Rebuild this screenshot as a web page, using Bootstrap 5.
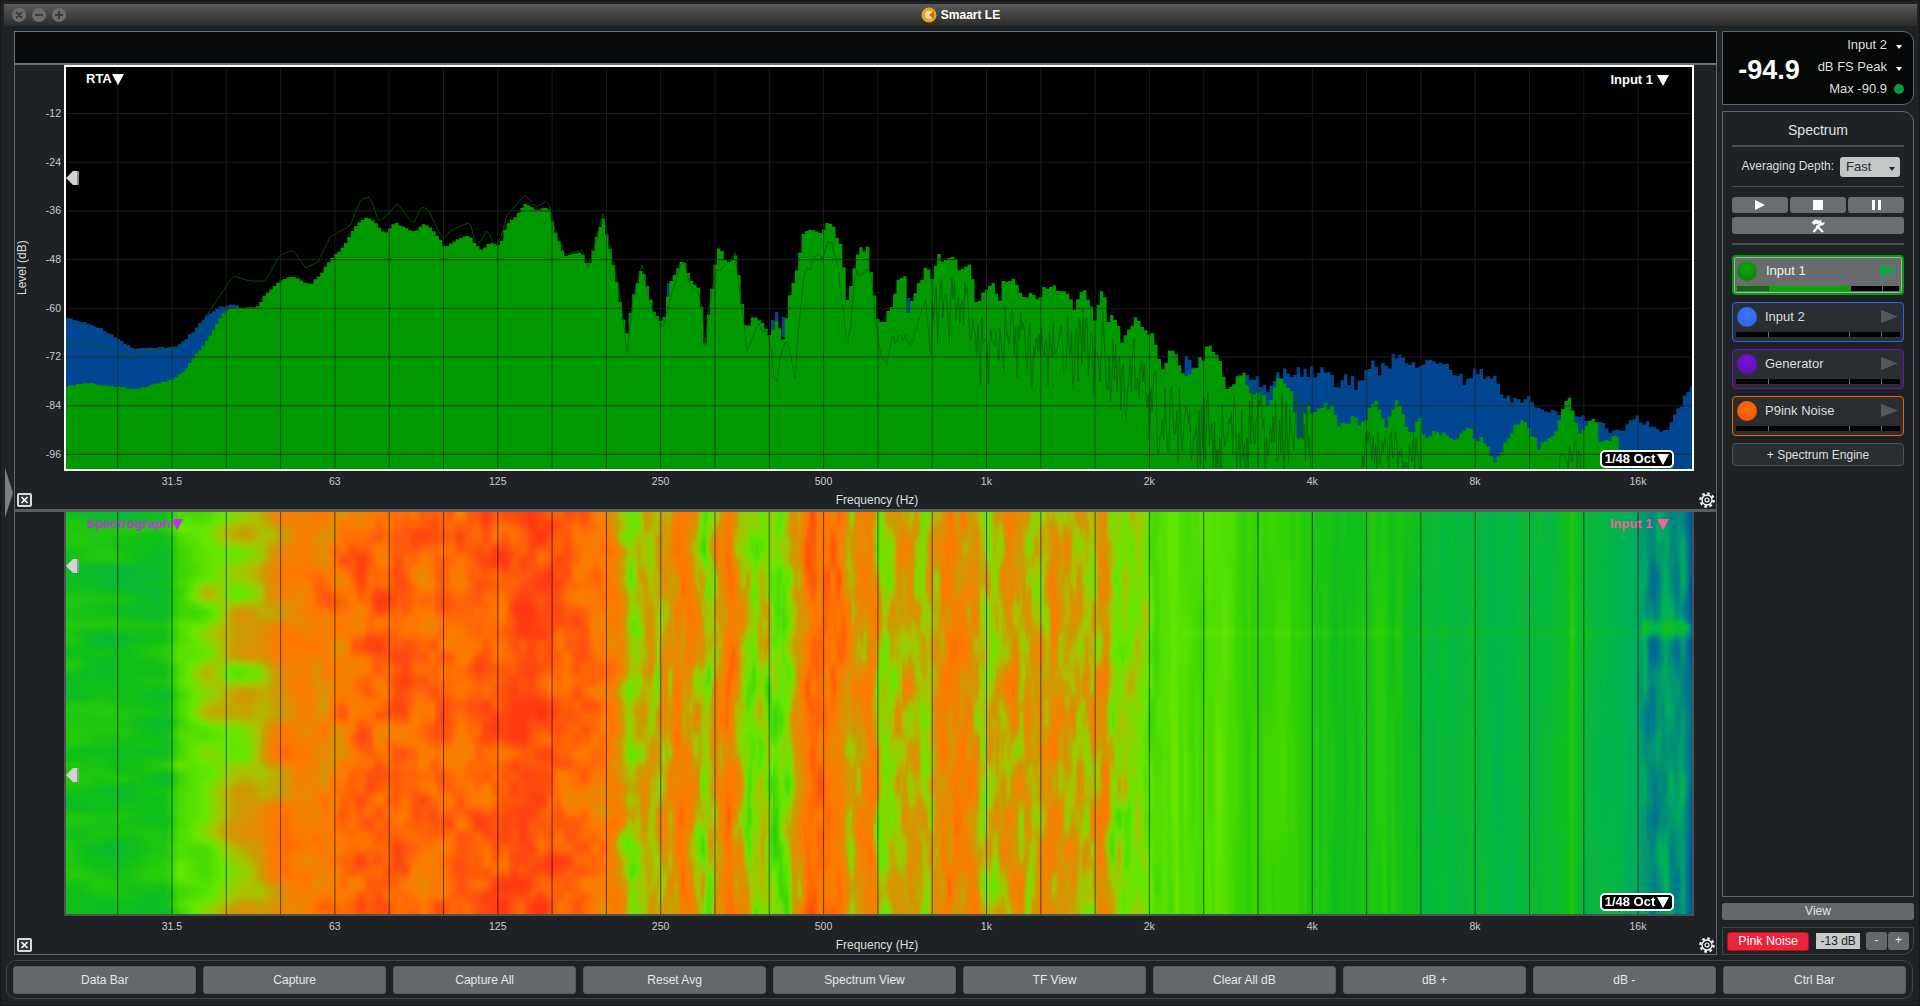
<!doctype html>
<html lang="en">
<head>
<meta charset="utf-8">
<title>Smaart LE</title>
<link href="https://cdn.jsdelivr.net/npm/bootstrap@5.3.0/dist/css/bootstrap.min.css" rel="stylesheet">
<style>
html,body{height:1006px;overflow:hidden}
body{margin:0;background:#1e2225;color:#d8dadb;font-family:"Liberation Sans",Arial,sans-serif;font-size:12px;line-height:1.2;position:relative}
.outer-edge{height:1006px;border:1px solid #15181b}
.titlebar{height:22px;flex:none;margin:3px 2px 0 3px;background:linear-gradient(#5a5a5a,#2b2b2b);position:relative;color:#fff;font-weight:700;font-size:12px}
.lights{position:absolute;left:8px;top:3px}
.workarea{height:929px;flex:none;padding:5px 6px 0 13px;gap:5px}
.leftcol{width:1703px;flex:none}
.rightcol{width:192px;flex:none}
.databar{height:34px;flex:none;background:#090a0b;border:1px solid #66747d;border-bottom-width:2px}
.pane{border-left:1px solid #5c6870;border-right:1px solid #5c6870;flex:none}
.pane-a{height:447px;border-bottom:3px solid #565d63}
.pane-b{height:443px;border-bottom:1px solid #5c6870}
.axis-slot{width:49px;flex:none}
.axis-y{height:406px}
.axis-name{width:22px;writing-mode:vertical-rl;transform:rotate(180deg);text-align:center;font-size:12px;color:#dcdedf}
.axis-ticks{padding-top:24px;padding-right:3px;flex:1}
.ytick{height:48.7px;line-height:48.7px;text-align:right;font-size:10.5px;color:#c9cbcc}
.ytick:last-child{height:41px}
.plot-frame{width:1630px;flex:none;position:relative}
.plot-a{height:406px;border:2px solid #fff;background:#000}
.plot-b{height:404px;border:2px solid #4b5450;border-top:0;background:#000}
.layer{display:block;position:absolute;left:0;top:0;width:100%;height:100%}
.xrow{height:20px;padding-left:26.5px;margin-left:49px;font-size:10.5px;color:#c9cbcc;line-height:20px}
.xlab{width:162.9px;flex:none;text-align:center}
.foot{height:18px}
.foot-label{width:1626px;flex:none;text-align:center;font-size:12px;color:#dcdedf;line-height:14px}
.closer{width:15px;height:14px;border:2px solid #d8d8d8;border-radius:2px;margin-left:2px;background:#30363a;display:block}
.gear{margin-right:1px}
.overlay-l,.overlay-r{position:absolute;font-weight:700;font-size:13px;line-height:14px;display:flex;align-items:center;gap:0}
.overlay-l{left:20px;top:5px}
.overlay-r{right:23px;top:6px;gap:4px}
.over-b-l{top:5px}
.over-b-r{top:5px}
.tag-purple{color:#c22ff0}
.tag-pink{color:#ff5ea0}
.tag-white{color:#fff}
.tri{display:inline-block;width:0;height:0;border-left:6px solid transparent;border-right:6px solid transparent;border-top:11px solid currentColor}
.octave{position:absolute;right:18px;bottom:1px;height:18px;width:74px;background:#000;color:#fff;border:2px solid #fff;border-radius:5px;font-weight:700;font-size:13px;display:flex;align-items:center;justify-content:center;gap:2px}
.octave-b{bottom:3px}
.handle{position:absolute;left:0;width:13px;height:14px;display:block}
.hnd-a{top:104px}
.hnd-b{top:47px}
.hnd-c{top:256px}
.side-tab{position:absolute;left:5px;top:468px;width:8px;height:50px;display:block}
.meterbox{height:74px;flex:none;background:#060707;border:1px solid #5c6870;border-radius:0 11px 11px 0;margin-bottom:6px}
.bigval{width:92px;flex:none;font-size:27px;font-weight:700;color:#fff;text-align:center;padding-top:5px}
.meterrows{flex:1;padding-top:2px}
.mrow{height:22px;font-size:13px;color:#dcdedf}
.mslot{width:26px;flex:none;display:flex;justify-content:center;padding-right:2px}
.caret-w{width:0;height:0;border-left:3.5px solid transparent;border-right:3.5px solid transparent;border-top:4px solid #fff;margin-top:4px}
.led{width:10px;height:10px;border-radius:50%;background:#0a9a3a}
.specbox{height:786px;flex:none;border:1px solid #5c6870;border-radius:0 11px 0 0;padding:0 9px}
.spechead{height:33px;line-height:37px;text-align:center;font-size:14px;color:#e0e1e2}
.rule{height:2px;background:#474d52}
.avgrow{height:39px;padding-right:4px;gap:6px;font-size:12px;color:#dcdedf}
.fastsel{width:60px;height:20px;background:#c3c7c7;color:#2a2c2e;border-radius:3px;font-size:13px;padding:0 6px;line-height:20px;position:relative}
.fastsel i{position:absolute;right:5px;top:10px;width:0;height:0;border-left:3.5px solid transparent;border-right:3.5px solid transparent;border-top:4px solid #222}
.rule-thin{height:1px;background:#474d52;margin-bottom:10px}
.trans{height:16px;gap:2px}
.trans>div{flex:1;background:#696e73;border-radius:3px;display:flex;align-items:center;justify-content:center}
.toolsbtn{height:17px;background:#696e73;border-radius:3px;margin-top:4px;display:flex;align-items:center;justify-content:center}
.rule-eng{margin-top:9px;margin-bottom:10px}
.engines{gap:7px}
.engine{height:40px;border:1.5px solid;border-radius:4px;background:#2a2e33;padding:1px 3px 0 4px;color:#dcdedf;font-size:13px}
.engine-on{background:#686c6e;border:2px solid #00a000;box-shadow:inset 0 0 0 1px #a8acac;padding:1px 3px 0;color:#f0f0f0}
.eng-blue{border-color:#2a62e8}
.eng-purple{border-color:#6c10c8}
.eng-orange{border-color:#f06000}
.engtop{height:25px;gap:8px}
.engine-on .engtop{gap:9px}
.dot{width:20px;height:20px;border-radius:50%;flex:none}
.dot-g{background:radial-gradient(circle at 50% 35%,#10a810,#067a06)}
.dot-b{background:radial-gradient(circle at 50% 35%,#3f78ff,#2a5be8)}
.dot-p{background:radial-gradient(circle at 50% 35%,#7a12d8,#5a0cae)}
.dot-o{background:radial-gradient(circle at 50% 35%,#ff6a08,#e85400)}
.playtri{margin-left:auto;margin-right:2px;display:block}
.mtr{height:5px;background:#000;margin-top:3px;margin-left:-1px}
.engine-on .mtr{margin-left:0}
.mtr>span{display:block;height:100%}
.s1{width:32px}.s2{width:81px;border-left:1px solid #6d6d6d}.s3{width:32px;border-left:1px solid #6d6d6d}.s4{width:17px;border-left:1px solid #6d6d6d}
.lit1{background:#0a6a0a}.lit2{background:#00aa00;border-left:0}
.addeng{height:23px;margin-top:7px;border:1px solid #4c5258;border-radius:4px;background:#2a2e33;text-align:center;line-height:22px;font-size:12px;color:#dcdedf}
.viewbtn{height:17px;flex:none;margin-top:6px;background:#63686c;border-radius:3px;text-align:center;line-height:17px;font-size:12px;color:#e2e3e4}
.pinkbox{height:28px;flex:none;margin-top:7px;border:1px solid #3e454a;border-radius:0 0 11px 0;padding:0 4px;gap:7px}
.pinkbtn{width:83px;height:19px;background:#ee2238;border:1px solid #b01020;border-radius:3px;color:#fff;text-align:center;line-height:17px;font-size:12.5px}
.dbval{width:44px;height:16px;background:#c5c9c9;color:#222;text-align:center;line-height:16px;font-size:12px}
.pm{gap:1px;margin-left:-1px}
.pm>div{width:21px;height:18px;background:#63686c;color:#e8e8e8;text-align:center;line-height:17px;font-size:12px;border-radius:3px}
.bottombar{height:39px;flex:none;margin:5px 6px 0 5px;border:1px solid #3e454a;border-radius:10px;padding:5px 6px;gap:6.5px}
.bar-btn.btn{flex:1 1 0;height:28px;font-size:12px;padding:0;line-height:27px;color:#e6e7e8;background:#63686c;border:1px solid #575c60;border-radius:3px}
</style>
</head>
<body>
<div class="outer-edge d-flex flex-column">
  <div class="titlebar d-flex align-items-center justify-content-center gap-1">
    <svg class="lights" width="66" height="16" viewBox="0 0 66 16" aria-hidden="true">
      <g fill="#6c6c6c"><circle cx="7" cy="8" r="7"/><circle cx="27" cy="8" r="7"/><circle cx="47" cy="8" r="7"/></g>
      <g stroke="#3c3c3c" stroke-width="2" fill="none"><path d="M4 5l6 6M10 5l-6 6M23 8h8M43 8h8M47 4v8"/></g>
    </svg>
    <svg width="16" height="16" viewBox="0 0 16 16" aria-hidden="true"><circle cx="8" cy="8" r="7.5" fill="#f0a020"/><circle cx="8" cy="8" r="4" fill="#ffe6a0"/><path d="M8 8l5-4v8z" fill="#c86a10"/></svg>
    <span>Smaart LE</span>
  </div>
  <div class="workarea d-flex">
    <div class="leftcol d-flex flex-column">
      <div class="databar"></div>
      <div class="pane pane-a">
        <div class="d-flex">
          <div class="axis-slot axis-y d-flex">
            <div class="axis-name">Level (dB)</div>
            <div class="axis-ticks d-flex flex-column">
              <div class="ytick">-12</div><div class="ytick">-24</div><div class="ytick">-36</div><div class="ytick">-48</div><div class="ytick">-60</div><div class="ytick">-72</div><div class="ytick">-84</div><div class="ytick">-96</div>
            </div>
          </div>
          <div class="plot-frame plot-a">
            <svg id="rta" class="layer" viewBox="66 67 1626 402" preserveAspectRatio="none" aria-hidden="true"></svg>
            <div class="overlay-l tag-white"><span>RTA</span><span class="tri"></span></div>
            <div class="overlay-r tag-white"><span>Input 1</span><span class="tri"></span></div>
            <svg class="handle hnd-a" viewBox="0 0 13 14" aria-hidden="true"><path d="M0 7L7 0h5.5v14H7z" fill="#d2d2d2"/><path d="M11 0h1.5v14H11z" fill="#8e8e8e"/></svg>
            <div class="octave"><span>1/48 Oct</span><span class="tri"></span></div>
          </div>
        </div>
        <div class="xrow d-flex"><span class="xlab">31.5</span><span class="xlab">63</span><span class="xlab">125</span><span class="xlab">250</span><span class="xlab">500</span><span class="xlab">1k</span><span class="xlab">2k</span><span class="xlab">4k</span><span class="xlab">8k</span><span class="xlab">16k</span></div>
        <div class="foot d-flex align-items-center">
          <div class="axis-slot"><svg class="closer" viewBox="0 0 11 10" aria-hidden="true"><path d="M2.5 2l6 6M8.5 2l-6 6" stroke="#fff" stroke-width="1.6"/></svg></div>
          <div class="foot-label">Frequency (Hz)</div>
          <svg width="16" height="16" viewBox="0 0 16 16" class="ms-auto gear" aria-hidden="true"><circle cx="8" cy="8" r="6.6" fill="none" stroke="#fff" stroke-width="2.4" stroke-dasharray="2.6 2.58"/><circle cx="8" cy="8" r="5" fill="#1e2225" stroke="#fff" stroke-width="1.3"/><circle cx="8" cy="8" r="2" fill="none" stroke="#fff" stroke-width="1.2"/></svg>
        </div>
      </div>
      <div class="pane pane-b">
        <div class="d-flex">
          <div class="axis-slot"></div>
          <div class="plot-frame plot-b">
            <canvas id="spectro" class="layer" width="813" height="101"></canvas>
            <svg id="spgrid" class="layer" viewBox="66 512 1626 402" preserveAspectRatio="none" aria-hidden="true"></svg>
            <div class="overlay-l over-b-l tag-purple"><span>Spectrograph</span><span class="tri"></span></div>
            <div class="overlay-r over-b-r tag-pink"><span>Input 1</span><span class="tri"></span></div>
            <svg class="handle hnd-b" viewBox="0 0 13 14" aria-hidden="true"><path d="M0 7L7 0h5.5v14H7z" fill="#d2d2d2"/><path d="M11 0h1.5v14H11z" fill="#8e8e8e"/></svg>
            <svg class="handle hnd-c" viewBox="0 0 13 14" aria-hidden="true"><path d="M0 7L7 0h5.5v14H7z" fill="#d2d2d2"/><path d="M11 0h1.5v14H11z" fill="#8e8e8e"/></svg>
            <div class="octave octave-b"><span>1/48 Oct</span><span class="tri"></span></div>
          </div>
        </div>
        <div class="xrow d-flex"><span class="xlab">31.5</span><span class="xlab">63</span><span class="xlab">125</span><span class="xlab">250</span><span class="xlab">500</span><span class="xlab">1k</span><span class="xlab">2k</span><span class="xlab">4k</span><span class="xlab">8k</span><span class="xlab">16k</span></div>
        <div class="foot d-flex align-items-center">
          <div class="axis-slot"><svg class="closer" viewBox="0 0 11 10" aria-hidden="true"><path d="M2.5 2l6 6M8.5 2l-6 6" stroke="#fff" stroke-width="1.6"/></svg></div>
          <div class="foot-label">Frequency (Hz)</div>
          <svg width="16" height="16" viewBox="0 0 16 16" class="ms-auto gear" aria-hidden="true"><circle cx="8" cy="8" r="6.6" fill="none" stroke="#fff" stroke-width="2.4" stroke-dasharray="2.6 2.58"/><circle cx="8" cy="8" r="5" fill="#1e2225" stroke="#fff" stroke-width="1.3"/><circle cx="8" cy="8" r="2" fill="none" stroke="#fff" stroke-width="1.2"/></svg>
        </div>
      </div>
    </div>
    <div class="rightcol d-flex flex-column">
      <div class="meterbox d-flex">
        <div class="bigval d-flex align-items-center justify-content-center">-94.9</div>
        <div class="meterrows d-flex flex-column">
          <div class="mrow d-flex align-items-center justify-content-end"><span>Input 2</span><span class="mslot"><span class="caret-w"></span></span></div>
          <div class="mrow d-flex align-items-center justify-content-end"><span>dB FS Peak</span><span class="mslot"><span class="caret-w"></span></span></div>
          <div class="mrow d-flex align-items-center justify-content-end"><span>Max -90.9</span><span class="mslot"><span class="led"></span></span></div>
        </div>
      </div>
      <div class="specbox d-flex flex-column">
        <div class="spechead">Spectrum</div>
        <div class="rule"></div>
        <div class="avgrow d-flex align-items-center justify-content-end"><span>Averaging Depth:</span><div class="fastsel">Fast<i></i></div></div>
        <div class="rule-thin"></div>
        <div class="trans d-flex">
          <div><svg width="12" height="10" viewBox="0 0 12 10" aria-hidden="true"><path d="M1 0l10 5-10 5z" fill="#fff"/></svg></div>
          <div><svg width="10" height="10" viewBox="0 0 10 10" aria-hidden="true"><rect width="10" height="10" fill="#fff"/></svg></div>
          <div><svg width="9" height="10" viewBox="0 0 9 10" aria-hidden="true"><path d="M0 0h3v10H0zM6 0h3v10H6z" fill="#fff"/></svg></div>
        </div>
        <div class="toolsbtn"><svg width="14" height="14" viewBox="0 0 14 14" aria-hidden="true"><path d="M2.500 13L9.500 5" stroke="#fff" stroke-width="2.200"/><path d="M.5 3.500L4 .5 8 1.500 9 3 7 5.500 5 4.500 3 6z" fill="#fff"/><path d="M5.500 6.500L12 13" stroke="#fff" stroke-width="2.200"/><path d="M10.500 .5a3 3 0 0 0-2 4l2 2a3 3 0 0 0 3-3.500l-2 1-1.300-1.300z" fill="#fff"/></svg></div>
        <div class="rule rule-eng"></div>
        <div class="engines d-flex flex-column">
          <div class="engine engine-on">
            <div class="engtop d-flex align-items-center"><span class="dot dot-g"></span><span>Input 1</span><svg class="playtri" width="17" height="13" viewBox="0 0 17 13" aria-hidden="true"><path d="M0 0l17 6.500L0 13z" fill="#0aa54a"/></svg></div>
            <div class="mtr d-flex"><span class="s1 lit1"></span><span class="s2 lit2"></span><span class="s3"></span><span class="s4"></span></div>
          </div>
          <div class="engine eng-blue">
            <div class="engtop d-flex align-items-center"><span class="dot dot-b"></span><span>Input 2</span><svg class="playtri" width="17" height="13" viewBox="0 0 17 13" aria-hidden="true"><path d="M0 0l17 6.500L0 13z" fill="#54585c"/></svg></div>
            <div class="mtr d-flex"><span class="s1"></span><span class="s2"></span><span class="s3"></span><span class="s4"></span></div>
          </div>
          <div class="engine eng-purple">
            <div class="engtop d-flex align-items-center"><span class="dot dot-p"></span><span>Generator</span><svg class="playtri" width="17" height="13" viewBox="0 0 17 13" aria-hidden="true"><path d="M0 0l17 6.500L0 13z" fill="#54585c"/></svg></div>
            <div class="mtr d-flex"><span class="s1"></span><span class="s2"></span><span class="s3"></span><span class="s4"></span></div>
          </div>
          <div class="engine eng-orange">
            <div class="engtop d-flex align-items-center"><span class="dot dot-o"></span><span>P9ink Noise</span><svg class="playtri" width="17" height="13" viewBox="0 0 17 13" aria-hidden="true"><path d="M0 0l17 6.500L0 13z" fill="#54585c"/></svg></div>
            <div class="mtr d-flex"><span class="s1"></span><span class="s2"></span><span class="s3"></span><span class="s4"></span></div>
          </div>
        </div>
        <div class="addeng">+ Spectrum Engine</div>
      </div>
      <div class="viewbtn">View</div>
      <div class="pinkbox d-flex align-items-center">
        <div class="pinkbtn">Pink Noise</div>
        <div class="dbval">-13 dB</div>
        <div class="pm d-flex"><div>-</div><div>+</div></div>
      </div>
    </div>
  </div>
  <div class="bottombar d-flex">
    <button class="btn bar-btn">Data Bar</button>
    <button class="btn bar-btn">Capture</button>
    <button class="btn bar-btn">Capture All</button>
    <button class="btn bar-btn">Reset Avg</button>
    <button class="btn bar-btn">Spectrum View</button>
    <button class="btn bar-btn">TF View</button>
    <button class="btn bar-btn">Clear All dB</button>
    <button class="btn bar-btn">dB +</button>
    <button class="btn bar-btn">dB -</button>
    <button class="btn bar-btn">Ctrl Bar</button>
  </div>
</div>
<svg class="side-tab" viewBox="0 0 8 50" aria-hidden="true"><path d="M0 0l8 25-8 25z" fill="#7a7f82"/></svg>
<script>
(function(){
  var NS='http://www.w3.org/2000/svg';
  var seed=12345;
  function R(){seed=(seed*1664525+1013904223)>>>0;return seed/4294967296;}
  function mk(p,t,a){var e=document.createElementNS(NS,t);for(var k in a)e.setAttribute(k,a[k]);p.appendChild(e);return e;}
  function lerp(pts,x){
    if(x<=pts[0][0])return pts[0][1];
    for(var i=1;i<pts.length;i++){if(x<=pts[i][0]){var a=pts[i-1],b=pts[i];return a[1]+(b[1]-a[1])*(x-a[0])/(b[0]-a[0]);}}
    return pts[pts.length-1][1];
  }
  var z8=[[0,195],[20,135],[60,95],[75,70],[110,90],[145,80],[165,150],[195,230],[245,215],[265,265],[290,170],[310,115],[330,205],[350,300],[365,390],[380,465],[400,350],[425,260],[445,325],[460,395],[490,430],[510,310],[550,235],[570,300],[600,325],[615,490],[630,365],[650,220],[660,195],[680,250],[710,225],[725,360],[740,455],[760,405],[790,430],[810,470],[830,420],[850,480],[870,340],[890,270],[910,160],[930,150],[965,160],[985,120],[1015,165],[1030,240],[1040,370],[1060,300],[1065,225],[1085,210],[1110,215],[1115,300],[1130,405],[1140,435],[1175,380],[1195,295],[1215,300],[1225,395],[1245,350],[1260,300],[1280,265],[1300,310],[1310,225],[1340,240],[1360,225],[1385,280],[1390,245],[1410,250],[1430,380],[1450,340],[1475,315],[1490,330]].map(function(p){return [500+p[0]/3,180+p[1]/3];});
  var z9=[[0,170],[10,125],[25,120],[45,155],[60,180],[72,150],[90,180],[103,130],[120,150],[135,150],[155,165],[165,210],[185,135],[200,180],[215,245],[232,118],[240,240],[262,225],[270,300],[290,270],[307,217],[325,275],[345,265],[360,390],[390,320],[405,395],[440,380],[475,318],[490,355],[510,460],[543,397],[560,470],[600,480],[635,405],[655,480],[670,600],[690,510],[715,495],[745,515],[760,570],[790,530],[810,570],[845,457],[860,560],[885,490],[900,495],[920,590],[940,530],[950,590],[985,570],[1000,600],[1050,570],[1085,610],[1110,670],[1150,560],[1175,545],[1205,620],[1245,570],[1255,520],[1272,455],[1285,530],[1300,600],[1320,535],[1335,540],[1345,610],[1380,590],[1395,685],[1580,700]].map(function(p){return [1000+p[0]/2.24,240+p[1]/3];});
  var G=[[66,386],[87,383],[117,387],[133,389],[150,386],[173,379],[183,373],[193,358],[203,347],[213,330],[223,313],[230,308],[257,307],[267,293],[280,280],[293,276],[305,282],[310,285],[320,275],[330,260],[345,245],[355,226],[365,217],[375,222],[385,233],[395,222],[405,228],[415,232],[425,223],[435,232],[445,247],[460,238],[470,236],[480,250],[490,243]].concat(z8).concat(z9);
  var B=[[66,318],[83,322],[100,328],[117,338],[133,348],[150,348],[177,347],[193,332],[207,315],[220,307],[233,304],[240,307],[260,330],[1150,470],[1187,358],[1199,365],[1223,378],[1228,393],[1252,378],[1268,390],[1283,373],[1306,373],[1326,370],[1339,388],[1348,378],[1357,385],[1370,362],[1379,373],[1399,355],[1413,365],[1433,362],[1451,368],[1466,383],[1475,370],[1495,380],[1504,397],[1531,400],[1540,412],[1558,412],[1574,418],[1605,422],[1609,432],[1629,428],[1634,415],[1643,425],[1670,428],[1683,400],[1692,387]];
  var D=[[66,343],[75,342],[100,345],[130,357],[150,351],[170,348],[177,347],[195,333],[207,315],[233,276],[250,281],[265,281],[280,255],[293,250],[306,268],[318,262],[330,237],[350,226],[361,199],[370,197],[379,222],[388,214],[397,203],[413,224],[421,207],[428,209],[443,240],[450,231],[470,222],[475,242],[481,242],[487,229],[495,247],[500,240],[507,215],[525,195],[537,207],[548,200],[555,230],[565,255],[582,250],[588,268],[597,237],[603,213],[610,248],[617,280],[622,310],[627,353],[633,297],[642,265],[648,295],[653,312],[663,327],[670,300],[683,258],[690,285],[700,295],[705,345],[710,302],[717,265],[725,270],[735,255],[742,310],[748,355],[757,325],[770,340],[775,390],[785,335],[795,375],[803,280],[815,255],[822,260],[830,235],[838,270],[848,350],[855,275],[870,270],[880,355],[887,365],[892,340],[905,335],[912,345],[925,300]];
  function stepPath(env,jit){
    var d='M66 469',x;
    for(x=66;x<1692;x+=3.39){
      var y=lerp(env,x+1.7);
      if(jit){var a=x<830?1.5:(x<1180?9:(x<1400?13:9));y+=(R()-.5)*a;}
      y=Math.min(469,y);
      d+=' L'+x.toFixed(1)+' '+y.toFixed(1)+' L'+(x+3.39).toFixed(1)+' '+y.toFixed(1);
    }
    return d+' L1692 469 Z';
  }
  var s=document.getElementById('rta');
  mk(s,'path',{d:stepPath(B,true),fill:'#004690'});
  [[775,312,30],[782,317,20],[786,340,45],[771,320,20],[893,295,30],[886,320,20],[907,298,30],[896,325,15],[667,283,15]].forEach(function(r){mk(s,'rect',{x:r[0],y:r[1],width:3.4,height:r[2],fill:'#004690'});});
  mk(s,'path',{d:stepPath(G,true),fill:'#009a00'});
  var d='',x,first=true;
  for(x=66;x<1692;x+=(x<830?3:1.3)){
    var y;
    if(x<925){y=lerp(D,x)+(x>700?(R()-.5)*10:0);}
    else if(x<1180){y=lerp(G,x)+18+R()*(40+(x-925)*0.18);if(R()<.1)y+=30;}
    else if(x<1310){y=390+R()*85;}
    else if(x>1362&&x<1425){y=425+R()*50;}
    else if(x>1560&&x<1580){y=440+R()*35;}
    else{y=478;}
    d+=(first?'M':'L')+x.toFixed(1)+' '+Math.min(480,y).toFixed(1)+' ';first=false;
  }
  mk(s,'path',{d:d,fill:'none',stroke:'#0a5f0a','stroke-opacity':.85,'stroke-width':.9,'stroke-linejoin':'round'});
  var k;
  for(k=0;k<8;k++){var yy=113.5+48.7*k;mk(s,'line',{x1:66,x2:1692,y1:yy,y2:yy,stroke:'#262626','stroke-opacity':.7,'stroke-width':1.1});}
  for(k=-1;k<29;k++){var xx=172+54.3*k;mk(s,'line',{x1:xx,x2:xx,y1:67,y2:469,stroke:'#262626','stroke-opacity':.7,'stroke-width':1});}
  var g2=document.getElementById('spgrid');
  for(k=-1;k<29;k++){var x2=172+54.3*k;mk(g2,'line',{x1:x2,x2:x2,y1:512,y2:914,stroke:'#000','stroke-opacity':.6,'stroke-width':1});}

  var base=[[65,.34],[117,.33],[165,.34],[178,.47],[201,.52],[222,.56],[259,.60],[285,.70],[332,.72],[374,.80],[426,.76],[468,.78],[525,.87],[583,.76],[614,.70],[630,.54],[646,.62],[656,.58],[682,.72],[706,.53],[729,.74],[750,.53],[766,.55],[779,.48],[792,.58],[808,.78],[839,.74],[850,.6],[871,.72],[880,.55],[906,.63],[924,.58],[948,.71],[969,.68],[985,.56],[1011,.66],[1032,.6],[1052,.66],[1073,.62],[1089,.58],[1102,.68],[1115,.53],[1141,.56],[1152,.47],[1173,.50],[1194,.46],[1220,.5],[1246,.42],[1283,.44],[1314,.36],[1351,.33],[1382,.38],[1429,.27],[1481,.28],[1497,.25],[1565,.3],[1570,.38],[1580,.28],[1612,.25],[1633,.22],[1648,.15],[1654,.13],[1665,.2],[1675,.15],[1682,.18],[1690,.06]];
  var cm=[[0,[0,80,160]],[.12,[0,120,140]],[.22,[0,176,90]],[.33,[16,192,24]],[.45,[64,216,0]],[.52,[104,232,0]],[.58,[168,196,0]],[.62,[204,156,0]],[.68,[240,132,0]],[.74,[255,120,0]],[.85,[255,74,16]],[1,[255,32,16]]];
  function color(v){
    v=Math.max(0,Math.min(1,v));
    for(var i=1;i<cm.length;i++){if(v<=cm[i][0]){var a=cm[i-1],b=cm[i],t=(v-a[0])/(b[0]-a[0]);return [a[1][0]+(b[1][0]-a[1][0])*t,a[1][1]+(b[1][1]-a[1][1])*t,a[1][2]+(b[1][2]-a[1][2])*t];}}
    return cm[cm.length-1][1];
  }
  function hash(i,j){var h=(i*374761393+j*668265263)|0;h=Math.imul(h^(h>>>13),1274126177);return ((h^(h>>>16))>>>0)/4294967296;}
  function vn(x,y){
    var i=Math.floor(x),j=Math.floor(y),u=x-i,v=y-j;u=u*u*(3-2*u);v=v*v*(3-2*v);
    var a=hash(i,j),b=hash(i+1,j),c=hash(i,j+1),e=hash(i+1,j+1);
    return (a+(b-a)*u+(c-a)*v+(a-b-c+e)*u*v)*2-1;
  }
  function band(X,a,b,f){var l=Math.max(0,Math.min(1,(X-a)/f+.5)),h=Math.max(0,Math.min(1,(b-X)/f+.5));return l*h;}
  var cv=document.getElementById('spectro'),ctx=cv.getContext('2d');
  var W=cv.width,H=cv.height,img=ctx.createImageData(W,H);
  for(var py=0;py<H;py++){
    for(var px=0;px<W;px++){
      var X=66+px*2,Y=py*4;
      var wob=vn(py/9,7.3)*5;
      var v=lerp(base,X+wob*band(X,300,1200,80));
      var n1=vn(X/55,Y/14)+.4*vn(X/25,Y/7+40);
      var n1b=vn(X/40+30,Y/20+9);
      var n2=vn(X/20,Y/22+60)+.5*vn(X/9,Y/12+80);
      var n3=vn(X/6.5,Y/34+20)+.4*vn(X/3,Y/16+90);
      var n4=vn(X/4,Y/130+50);
      v+=band(X,40,190,30)*.05*n1;
      v+=band(X,190,300,30)*.085*n1b;
      v+=band(X,300,640,50)*.085*n2;
      v+=band(X,640,1145,50)*.075*n3;
      v+=band(X,1145,1640,50)*.025*n4;
      v+=band(X,1640,1700,10)*.05*n3;
      if(X>1640){v+=.13*Math.exp(-Math.pow((Y-115)/8,2));}
      else if(X>1180){v+=.02*Math.exp(-Math.pow((Y-120)/5,2));}
      var c=color(v),o=(py*W+px)*4;
      img.data[o]=c[0];img.data[o+1]=c[1];img.data[o+2]=c[2];img.data[o+3]=255;
    }
  }
  ctx.putImageData(img,0,0);
})();
</script>
</body>
</html>
